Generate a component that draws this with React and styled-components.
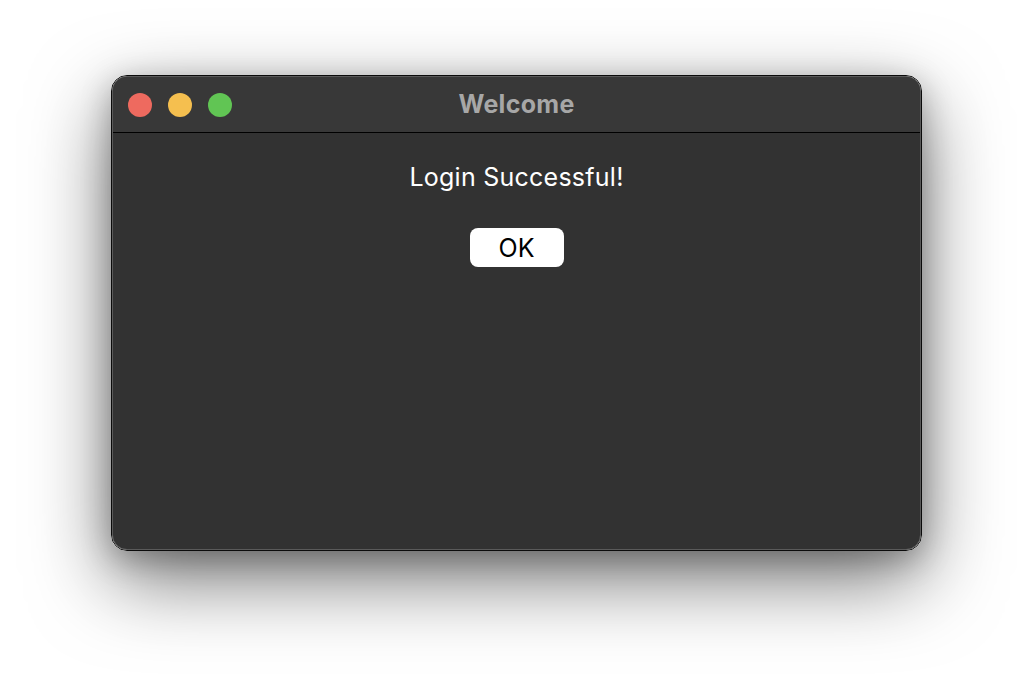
import React from "react";
import styled, { createGlobalStyle } from "styled-components";

const GlobalStyle = createGlobalStyle`
  html, body {
    margin: 0;
    padding: 0;
    background: #ffffff;
  }
  body {
    font-family: Inter, "Liberation Sans", Arial, sans-serif;
  }
`;

const Page = styled.div`
  width: 1034px;
  height: 698px;
  box-sizing: border-box;
  padding: 75px 0 0 111px;
  overflow: hidden;
`;

const Window = styled.div`
  width: 811px;
  height: 476px;
  box-sizing: border-box;
  border: 1px solid #0b0b0b;
  border-radius: 16px;
  box-shadow: 0 28px 80px rgba(0, 0, 0, 0.55), 0 8px 30px rgba(0, 0, 0, 0.25);
`;

const Frame = styled.div`
  height: 100%;
  box-sizing: border-box;
  border: 1px solid #5a5a5a;
  border-radius: 15px;
  overflow: hidden;
  background: #323232;
  display: flex;
  flex-direction: column;
`;

const TitleBar = styled.div`
  height: 55px;
  flex: none;
  background: #383838;
  border-bottom: 1px solid #000;
  display: grid;
  grid-template-columns: 1fr auto 1fr;
  align-items: center;
  padding: 0 15px;
`;

const Lights = styled.div`
  display: flex;
  gap: 16px;
`;

const Light = styled.span`
  width: 24px;
  height: 24px;
  border-radius: 50%;
  background: ${(p) => p.color};
`;

const Title = styled.div`
  color: #a7a7a7;
  font-size: 25px;
  font-weight: 700;
  letter-spacing: 0.3px;
  padding-bottom: 2px;
`;

const Content = styled.div`
  display: flex;
  flex-direction: column;
  align-items: center;
  padding-top: 29px;
`;

const Message = styled.div`
  color: #ffffff;
  font-size: 25px;
  line-height: 30px;
  letter-spacing: 0.25px;
`;

const OkButton = styled.button`
  margin-top: 36px;
  width: 94px;
  height: 39px;
  border: none;
  border-radius: 8px;
  background: #ffffff;
  color: #000;
  font-family: inherit;
  font-size: 25px;
  padding: 0;
`;

export default function App() {
  return (
    <>
      <GlobalStyle />
      <Page>
        <Window>
          <Frame>
            <TitleBar>
              <Lights>
                <Light color="#ee6a5f" />
                <Light color="#f5bf4f" />
                <Light color="#61c554" />
              </Lights>
              <Title>Welcome</Title>
              <div />
            </TitleBar>
            <Content>
              <Message>Login Successful!</Message>
              <OkButton>OK</OkButton>
            </Content>
          </Frame>
        </Window>
      </Page>
    </>
  );
}
